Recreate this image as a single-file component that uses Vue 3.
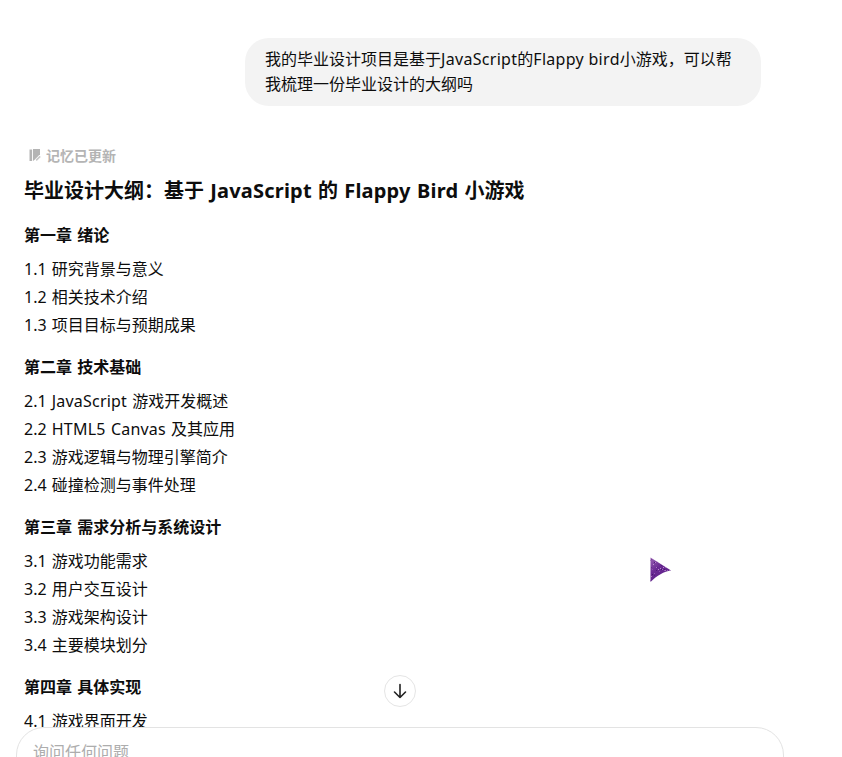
<script setup>
const sections = [
  { title: '第一章 绪论', items: ['1.1 研究背景与意义', '1.2 相关技术介绍', '1.3 项目目标与预期成果'] },
  { title: '第二章 技术基础', items: ['2.1 JavaScript 游戏开发概述', '2.2 HTML5 Canvas 及其应用', '2.3 游戏逻辑与物理引擎简介', '2.4 碰撞检测与事件处理'] },
  { title: '第三章 需求分析与系统设计', items: ['3.1 游戏功能需求', '3.2 用户交互设计', '3.3 游戏架构设计', '3.4 主要模块划分'] },
  { title: '第四章 具体实现', items: ['4.1 游戏界面开发'] },
]

const parts = (text) =>
  text.split(/([A-Za-z][A-Za-z0-9 ]*[A-Za-z0-9])/).filter(Boolean).map((t) => ({
    t,
    latin: /^[A-Za-z]/.test(t),
  }))

const bubble = [
  ...parts('我的毕业设计项目是基于JavaScript的Flappy bird小游戏，可以帮'),
  ...parts('我梳理一份毕业设计的大纲吗'),
]
const heading = parts('毕业设计大纲：基于 JavaScript 的 Flappy Bird 小游戏')

let seed = 7
const rand = () => {
  seed = (seed * 16807) % 2147483647
  return seed / 2147483647
}
const specks = Array.from({ length: 90 }, () => ({
  x: Math.floor(rand() * 20),
  y: Math.floor(rand() * 25),
  o: 0.3 + rand() * 0.6,
  light: rand() > 0.45,
}))
</script>

<template>
  <div class="page">
    <main class="thread">
      <div class="bubble"><span v-for="(p, i) in bubble" :key="i" :class="{ latin: p.latin }">{{ p.t }}</span></div>
      <div class="memory">
        <svg class="memory-icon" width="12" height="14" viewBox="0 0 12 14">
          <path d="M0.5 1.5h2.6v11.5H0.5z" fill="#b4b4b4"/>
          <path d="M4 1h7v5.2L5.6 11.8 4 13z" fill="#b4b4b4"/>
          <path d="M7.2 12.4l4-4" stroke="#c8c8c8" stroke-width="1.6" fill="none"/>
        </svg>
        <span>记忆已更新</span>
      </div>
      <h1><span v-for="(p, i) in heading" :key="i" :class="{ latin: p.latin }">{{ p.t }}</span></h1>
      <section v-for="s in sections" :key="s.title">
        <h2>{{ s.title }}</h2>
        <p v-for="item in s.items" :key="item"><span v-for="(p, i) in parts(item)" :key="i" :class="{ latin: p.latin }">{{ p.t }}</span></p>
      </section>
    </main>

    <svg class="cursor" width="22" height="26" viewBox="0 0 22 26">
      <defs>
        <linearGradient id="cg" x1="0" y1="0" x2="0.7" y2="1">
          <stop offset="0" stop-color="#9a62b4"/>
          <stop offset="0.45" stop-color="#6b2a94"/>
          <stop offset="1" stop-color="#5c2088"/>
        </linearGradient>
        <clipPath id="cc"><path d="M0.5 0.5L21 13.5C14 14.5 7 18.5 0.5 25z"/></clipPath>
      </defs>
      <path d="M0.5 0.5L21 13.5C14 14.5 7 18.5 0.5 25z" fill="url(#cg)"/>
      <g clip-path="url(#cc)">
        <rect v-for="(d, i) in specks" :key="i" :x="d.x" :y="d.y" width="1" height="1" :fill="d.light ? '#c79ad8' : '#3f1268'" :opacity="d.o"/>
      </g>
    </svg>

    <button class="scroll-down" aria-label="scroll down">
      <svg width="18" height="18" viewBox="0 0 18 18" fill="none" stroke="#222" stroke-width="1.6" stroke-linecap="round" stroke-linejoin="round"><path d="M9 2.5v13M3.5 10L9 15.5 14.5 10"/></svg>
    </button>

    <div class="composer">询问任何问题</div>
  </div>
</template>

<style>
html, body { margin: 0; background: #fff; overflow: hidden; }
</style>

<style scoped>
.page {
  position: relative;
  width: 842px;
  height: 757px;
  overflow: hidden;
  background: #fff;
  color: #0d0d0d;
  font-family: "Noto Sans", "Noto Sans CJK SC", sans-serif;
  font-size: 16px;
}
.thread { padding: 38px 0 0 24px; }
.bubble {
  box-sizing: border-box;
  width: 516px;
  height: 68px;
  margin-left: 221px;
  padding: 9px 20px;
  background: #f3f3f3;
  border-radius: 24px;
  font-size: 16px;
  line-height: 25px;
}
.bubble .latin { letter-spacing: 0.3px; }
.memory {
  display: flex;
  align-items: center;
  gap: 5px;
  height: 20px;
  margin-top: 39px;
  margin-left: 5px;
  color: #b4b4b4;
  font-size: 14px;
  font-weight: 700;
}
.memory-icon { display: block; }
h1 {
  margin: 11px 0 15px;
  font-size: 20px;
  line-height: 30px;
  font-weight: 700;
  word-spacing: 1px;
}
h1 .latin, p .latin { letter-spacing: 0.2px; }
section + section { margin-top: 14px; }
h2 {
  margin: 0 0 6px;
  font-size: 16px;
  line-height: 28px;
  font-weight: 700;
  word-spacing: 1px;
}
p {
  margin: 0;
  font-size: 16px;
  line-height: 28px;
  word-spacing: 1px;
}
.cursor { position: absolute; left: 650px; top: 557px; }
.scroll-down {
  position: absolute;
  left: 384px;
  top: 675px;
  display: flex;
  align-items: center;
  justify-content: center;
  width: 32px;
  height: 32px;
  padding: 0;
  background: #fff;
  border: 1px solid #e5e5e5;
  border-radius: 50%;
}
.composer {
  position: absolute;
  left: 16px;
  top: 727px;
  box-sizing: border-box;
  width: 768px;
  height: 70px;
  padding: 12px 16px;
  background: #fff;
  border: 1px solid #e3e3e3;
  border-radius: 28px;
  color: #adadad;
  font-size: 16px;
  line-height: 24px;
}
</style>
